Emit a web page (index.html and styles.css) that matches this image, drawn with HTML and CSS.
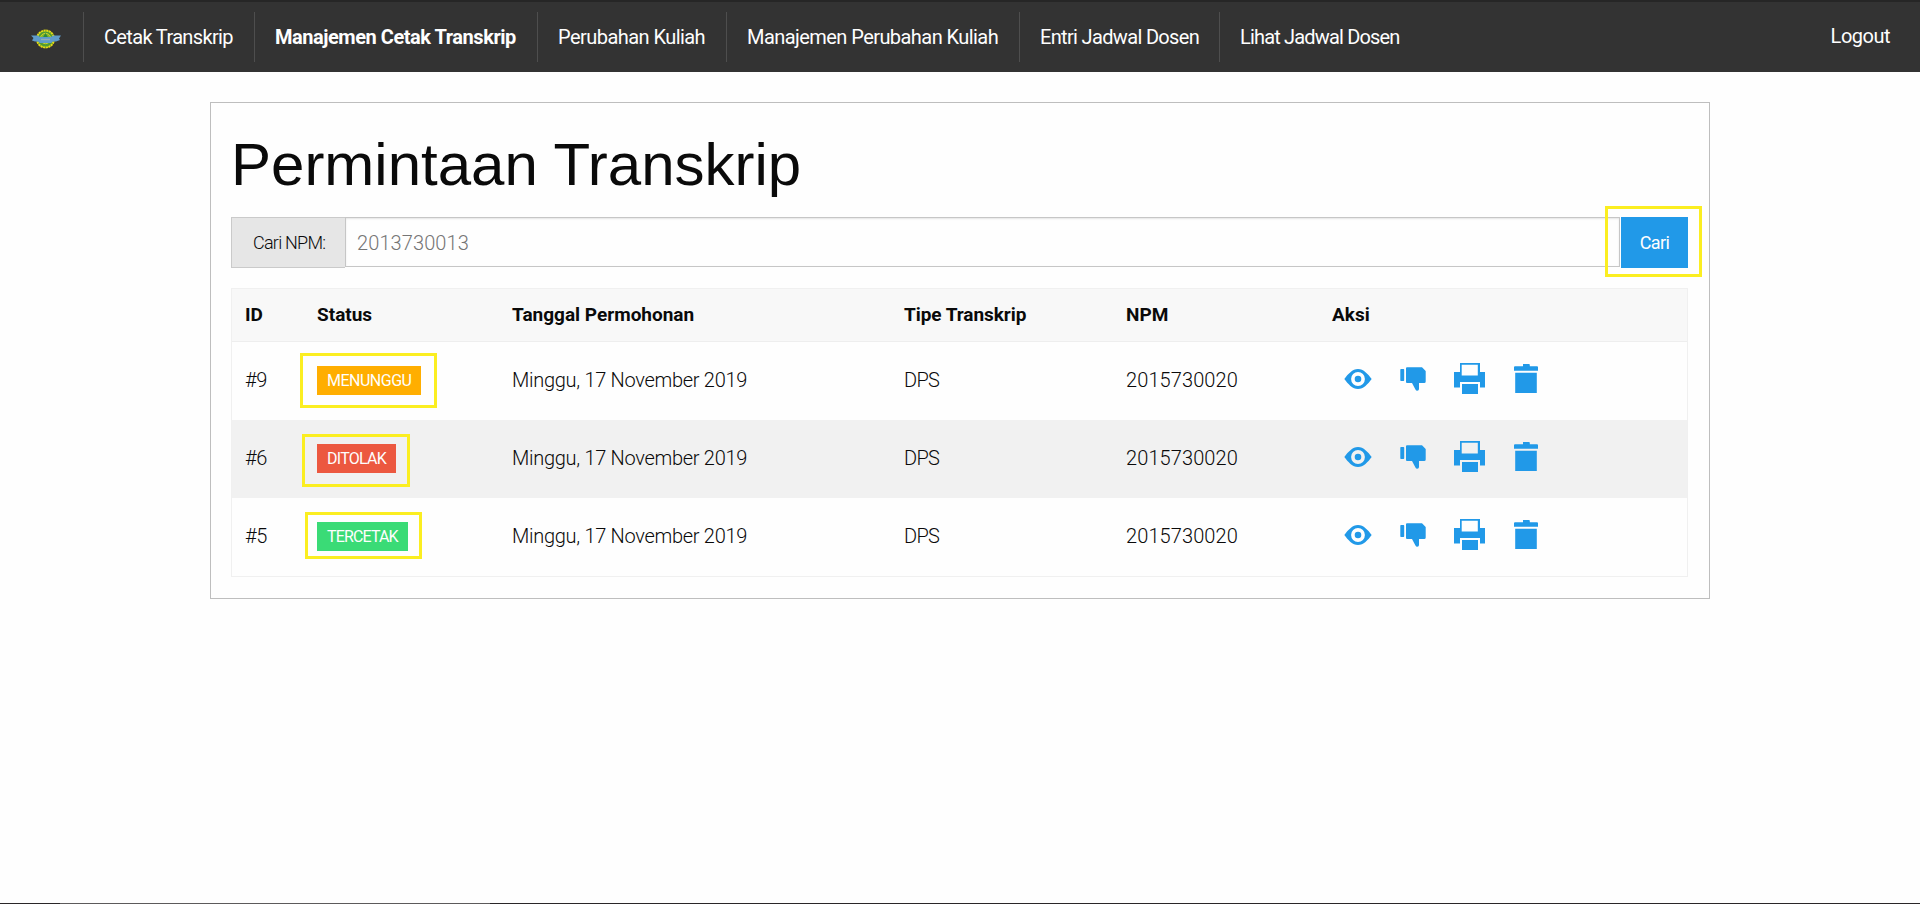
FILE: index.html
```html
<!DOCTYPE html>
<html lang="id">
<head>
<meta charset="utf-8">
<title>Permintaan Transkrip</title>
<link rel="stylesheet" href="styles.css">
</head>
<body>
<svg class="sprite" aria-hidden="true">
  <symbol id="eye" viewBox="0 0 28 20"><path fill-rule="evenodd" d="M.3 10C4 5 8.500 0 14 0s10 5 13.700 10C24 15 19.500 20 14 20S4 15 .3 10zM14 3.100a6.900 6.900 0 1 0 0 13.800 6.900 6.900 0 0 0 0-13.800zM14 6.700a3.300 3.300 0 1 1 0 6.600 3.300 3.300 0 0 1 0-6.600z"/></symbol>
  <symbol id="thumb" viewBox="0 0 26 24"><path d="M1 2h2.500q.7 0 .7.700v10.600q0 .7-.7.700H1q-.7 0-.7-.7V2.700Q.3 2 1 2zM7 .2h15L25.700 4v10.500q0 1.500-1.500 1.500H19v6q0 1.800-1.700 1.800-1.300 0-2-1.500L12 16H7q-1 0-1-1V1.200q0-1 1-1z"/></symbol>
  <symbol id="print" viewBox="0 0 31 31"><path fill-rule="evenodd" d="M6 0h20v9h5v15.500h-5V19H6v5.500H0V9h6zm1.700 1.700v10.800h16.100V1.700z"/><path d="M8 21h16v10H8z"/></symbol>
  <symbol id="trash" viewBox="0 0 24 29"><path d="M9 0h6q.8 0 .8 1v1.200H23q1 0 1 1v3.600H0V3.200q0-1 1-1h8zM1.200 8.700h21.600V29H1.200z"/></symbol>
</svg>

<nav class="topbar">
  <ul class="menu">
    <li class="brand">
      <svg class="logo" viewBox="0 0 32 20">
        <circle cx="15.500" cy="10" r="8.500" fill="#4f9a35" stroke="#e2dc16" stroke-width="2" stroke-dasharray="2.200 .5"/>
        <circle cx="15.500" cy="9.500" r="5.200" fill="#83b52d" stroke="#c8d22a" stroke-width="1"/>
        <path d="M12.500 9l3-5 3 5z" fill="#2f8a3a"/>
        <path d="M1 6.500h7l2 1.500h11l2-1.500h8l-2 3 1 1.500-4 1.500h-3l-2 1.500H10l-2-1.500H5L2 11.500 3.500 9z" fill="#5f9bcb"/>
        <path d="M11 10.500h9" stroke="#93aeb8" stroke-width="1.500"/>
      </svg>
    </li>
    <li class="item item-cetak">Cetak Transkrip</li>
    <li class="item item-manajemen active">Manajemen Cetak Transkrip</li>
    <li class="item item-perubahan">Perubahan Kuliah</li>
    <li class="item item-kelola">Manajemen Perubahan Kuliah</li>
    <li class="item item-entri">Entri Jadwal Dosen</li>
    <li class="item item-lihat">Lihat Jadwal Dosen</li>
  </ul>
  <a class="logout">Logout</a>
</nav>

<main class="card">
  <h1>Permintaan Transkrip</h1>
  <form class="search">
    <label class="search-label" for="npm">Cari NPM:</label>
    <input class="search-input" id="npm" type="text" placeholder="2013730013">
    <div class="search-action"><button class="search-button" type="button">Cari</button><span class="mark mark-search"></span></div>
  </form>
  <table class="requests">
    <colgroup><col class="c-id"><col class="c-status"><col class="c-date"><col class="c-type"><col class="c-npm"><col></colgroup>
    <thead>
      <tr><th>ID</th><th>Status</th><th>Tanggal Permohonan</th><th>Tipe Transkrip</th><th>NPM</th><th>Aksi</th></tr>
    </thead>
    <tbody>
      <tr>
        <td class="id">#9</td>
        <td><div class="status"><span class="badge waiting">MENUNGGU</span><span class="mark mark-waiting"></span></div></td>
        <td class="date">Minggu, 17 November 2019</td><td class="type">DPS</td><td class="npm">2015730020</td>
        <td><div class="actions"><svg class="eye"><use href="#eye"/></svg><svg class="thumb"><use href="#thumb"/></svg><svg class="print"><use href="#print"/></svg><svg class="trash"><use href="#trash"/></svg></div></td>
      </tr>
      <tr>
        <td class="id">#6</td>
        <td><div class="status"><span class="badge rejected">DITOLAK</span><span class="mark mark-rejected"></span></div></td>
        <td class="date">Minggu, 17 November 2019</td><td class="type">DPS</td><td class="npm">2015730020</td>
        <td><div class="actions"><svg class="eye"><use href="#eye"/></svg><svg class="thumb"><use href="#thumb"/></svg><svg class="print"><use href="#print"/></svg><svg class="trash"><use href="#trash"/></svg></div></td>
      </tr>
      <tr>
        <td class="id">#5</td>
        <td><div class="status"><span class="badge printed">TERCETAK</span><span class="mark mark-printed"></span></div></td>
        <td class="date">Minggu, 17 November 2019</td><td class="type">DPS</td><td class="npm">2015730020</td>
        <td><div class="actions"><svg class="eye"><use href="#eye"/></svg><svg class="thumb"><use href="#thumb"/></svg><svg class="print"><use href="#print"/></svg><svg class="trash"><use href="#trash"/></svg></div></td>
      </tr>
    </tbody>
  </table>
</main>
<footer class="edge"><span class="edge-light"></span></footer>
</body>
</html>
```
FILE: styles.css
```css
* { box-sizing: border-box; }

body {
  display: flex;
  flex-direction: column;
  height: 904px;
  margin: 0;
  overflow: hidden;
  background: #fefefe;
  color: #0a0a0a;
  font-family: Roboto, "Liberation Sans", sans-serif;
  font-size: 20px;
}

.sprite { display: none; }

/* Navigation */
.topbar {
  display: flex;
  justify-content: space-between;
  height: 72px;
  padding: 10px 30px 10px 0;
  border-top: 2px solid #262626;
  background: #333;
  color: #fefefe;
}
.menu {
  display: flex;
  margin: 0;
  padding: 0;
  list-style: none;
}
.brand { width: 83px; height: 50px; padding: 17px 0 0 30px; }
.logo { display: block; width: 32px; height: 20px; }
.item {
  height: 50px;
  padding-left: 20px;
  border-left: 1px solid #4e4e4e;
  line-height: 50px;
  white-space: nowrap;
}
.item-cetak { width: 171px; letter-spacing: -0.65px; }
.item-manajemen { width: 283px; letter-spacing: -0.46px; }
.item-perubahan { width: 189px; letter-spacing: -0.55px; }
.item-kelola { width: 293px; letter-spacing: -0.56px; }
.item-entri { width: 200px; letter-spacing: -0.66px; }
.item-lihat { width: 200px; letter-spacing: -0.83px; }
.active { font-weight: 700; }
.logout { line-height: 48px; letter-spacing: -0.5px; }

/* Content card */
.card {
  width: 1500px;
  height: 497px;
  margin: 30px auto 0;
  padding: 20px 21px 20px 20px;
  border: 1px solid #bebebe;
}
h1 {
  height: 84px;
  margin: 0 0 10px;
  font: 400 60px/83px "Liberation Sans", Arial, sans-serif;
}

/* Search row */
.search { display: flex; height: 51px; margin-bottom: 20px; }
.search-label {
  width: 114px;
  padding-left: 21px;
  border: 1px solid #cacaca;
  border-right: 0;
  background: #e6e6e6;
  font-size: 18px;
  font-weight: 300;
  line-height: 50px;
  letter-spacing: -0.75px;
}
.search-input {
  flex: 1;
  height: 50px;
  padding: 2px 11px 0;
  border: 1px solid #c6c6c6;
  background: #fefefe;
  box-shadow: inset 0 1px 2px rgba(10, 10, 10, .1);
  font: 300 20px Roboto, "Liberation Sans", sans-serif;
  letter-spacing: .1px;
}
.search-input::placeholder { color: #757575; opacity: 1; }
.search-action { position: relative; margin-left: 1px; }
.search-button {
  display: block;
  width: 67px;
  height: 51px;
  padding: 0;
  border: 0;
  background: #2199e8;
  color: #fefefe;
  font: 400 18px Roboto, "Liberation Sans", sans-serif;
  letter-spacing: -0.6px;
}

/* Highlight frames */
.mark { position: absolute; border: 3px solid #fbee21; }
.mark-search { left: -16px; top: -11px; width: 97px; height: 71px; }
.mark-waiting { left: -17px; top: -13px; width: 137px; height: 55px; }
.mark-rejected { left: -15px; top: -10px; width: 108px; height: 53px; }
.mark-printed { left: -12px; top: -10px; width: 117px; height: 47px; }

/* Requests table */
.requests {
  width: 1457px;
  border: 1px solid #f0f0f0;
  border-spacing: 0;
  table-layout: fixed;
}
.c-id { width: 72px; }
.c-status { width: 195px; }
.c-date { width: 392px; }
.c-type { width: 222px; }
.c-npm { width: 206px; }
th {
  height: 53px;
  padding: 0 13px 2px;
  border-bottom: 1px solid #eee;
  background: #f8f8f8;
  font-size: 19px;
  font-weight: 700;
  text-align: left;
}
th:nth-child(4) { letter-spacing: -0.06px; }
td {
  height: 78px;
  padding: 0 13px 1px;
  font-weight: 300;
  vertical-align: middle;
}
tbody tr:nth-child(even) { background: #f1f1f1; }
.id, .date, .type, .npm { padding-bottom: 3px; }
.id { letter-spacing: -0.4px; }
.date { letter-spacing: -0.29px; }
.type { letter-spacing: -0.7px; }
.npm { letter-spacing: .1px; }

.status { position: relative; width: max-content; }
.badge {
  display: block;
  height: 29px;
  padding-left: 10px;
  color: #fefefe;
  font-size: 16px;
  font-weight: 400;
  line-height: 29px;
}
.waiting { width: 104px; background: #ffae00; letter-spacing: -0.5px; }
.rejected { width: 79px; background: #ec5840; letter-spacing: -0.75px; }
.printed { width: 91px; background: #3adb76; letter-spacing: -0.85px; }

.actions { display: flex; height: 31px; padding-left: 12px; margin-top: -4px; }
.actions svg { display: block; fill: #2199e8; }
.eye { width: 28px; height: 20px; margin: 6px 28px 0 0; }
.thumb { width: 26px; height: 24px; margin: 4px 28px 0 0; }
.print { width: 31px; height: 31px; margin-right: 29px; }
.trash { width: 24px; height: 29px; margin-top: 1px; }

/* Window edge along the bottom */
.edge { display: flex; height: 1px; margin-top: auto; padding-left: 60px; background: #2a2628; }
.edge-light { width: 430px; background: #5c5a5b; }
```
